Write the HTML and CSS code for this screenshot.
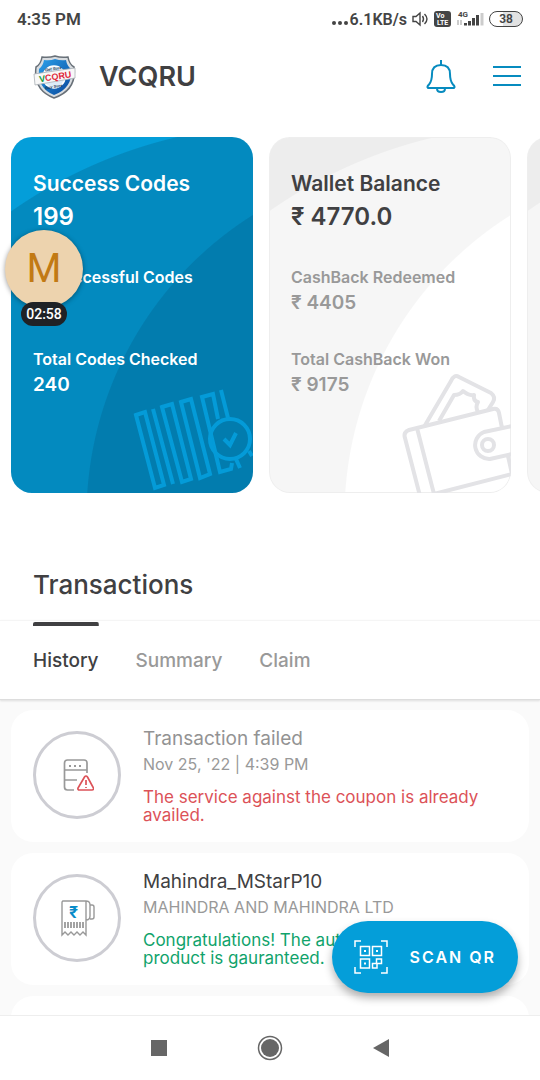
FILE: index.html
```html
<!DOCTYPE html>
<html lang="en">
<head>
<meta charset="utf-8">
<meta name="viewport" content="width=device-width, initial-scale=1">
<title>VCQRU</title>
<link rel="stylesheet" href="styles.css">
</head>
<body>
<div class="app">
  <div class="status-bar">
    <span>4:35 PM</span>
    <div class="status-icons">
      <span class="net-speed"><span class="dots"><i></i><i></i><i></i></span>6.1KB/s</span>
      <svg width="17" height="16" viewBox="0 0 17 16" fill="none" stroke="#444" stroke-width="1.4"><path d="M1 5.500H4L8 2V14L4 10.500H1Z"/><path d="M10.500 5Q12.500 8 10.500 11M12.500 3Q17.500 8 12.500 13"/></svg>
      <svg class="volte" width="17" height="16" viewBox="0 0 17 16"><rect width="17" height="16" rx="3" fill="#444"/><text x="2" y="7">Vo</text><text x="3" y="14">LTE</text></svg>
      <svg class="signal" width="28" height="18" viewBox="0 0 28 18"><text x="2" y="7">4G</text><path d="M2 10V15M5 10V15" stroke="#999"/><path d="M9.500 13V15.500M13.500 11V15.500M17.500 8V15.500M21.500 5V15.500" stroke="#444" stroke-width="3"/><path d="M26 3V15.500" stroke="#ccc" stroke-width="3"/></svg>
      <span class="battery">38</span>
    </div>
  </div>

  <header class="header">
    <svg class="logo" width="44" height="46" viewBox="0 0 44 46" role="img" aria-label="VCQRU logo">
      <defs><linearGradient id="shield" x1="0" y1="0" x2="1" y2="1"><stop offset="0" stop-color="#2ba0ea"/><stop offset="1" stop-color="#08479c"/></linearGradient></defs>
      <path d="M22 2Q28 4 35 3Q36 10 41 13Q44 36 21 44Q0 36 3 13Q8 10 9 3Q16 4 22 2Z" fill="#d8dce0" stroke="#687078" stroke-width="1.500"/>
      <path d="M22 5Q28 7 33 6Q34 12 38 15Q40 34 21 41Q4 34 6 15Q10 12 11 6Q17 7 22 5Z" fill="url(#shield)"/>
      <circle cx="21" cy="23" r="11" fill="#dcecf8" stroke="#fff" stroke-width="1.500"/>
      <text class="logo-small" x="12" y="16" transform="rotate(-9 21 15)">Get Sure</text>
      <text class="logo-small" x="12" y="34" transform="rotate(-9 21 33)">Buy Sure</text>
      <path d="M1 20L42 14V24L2 31Z" fill="#f8f8f8" stroke="#aab0b5" stroke-width=".8"/>
      <text class="logo-name" x="6" y="26" transform="rotate(-9 21 23)"><tspan fill="#16973a">V</tspan><tspan fill="#df2638">CQRU</tspan></text>
    </svg>
    <h1>VCQRU</h1>
    <div class="header-actions">
      <button type="button" aria-label="Notifications"><svg width="30" height="34" viewBox="0 0 30 34"><path d="M15 0V5M2 28Q0.500 27 3 24.500Q6 21 6 14Q6 5 15 5Q24 5 24 14Q24 21 27 24.500Q29.500 27 28 28ZM11 28.500Q11 32 15 32Q19 32 19 28.500"/></svg></button>
      <button type="button" aria-label="Menu"><svg width="28" height="34" viewBox="0 0 28 34"><path d="M0 7H28M0 16H28M0 25H28"/></svg></button>
    </div>
  </header>

  <main class="main">
    <section class="cards" aria-label="Overview">
      <article class="card card-blue">
        <h2>Success Codes</h2>
        <p class="card-total">199</p>
        <dl>
          <div><dt>Unsuccessful Codes</dt><dd>41</dd></div>
          <div><dt>Total Codes Checked</dt><dd>240</dd></div>
        </dl>
        <svg class="card-art" width="120" height="107" viewBox="0 0 120 107" fill="none" stroke="#049bd8" stroke-width="4"><path d="M3 29L12 26L31 99L22 102ZM20 23L40 98M29 21L39 18L58 93L49 96ZM48 16L58 13L77 88L67 92ZM85 33L80 8L69 11L87 86L98 83L99 77M88 4L95 32M103 73L107 82M116 65L119 70"/><circle cx="97" cy="53" r="20"/><path d="M91 53L97 59L103 47"/></svg>
      </article>
      <article class="card card-light">
        <h2>Wallet Balance</h2>
        <p class="card-total">₹ 4770.0</p>
        <dl>
          <div><dt>CashBack Redeemed</dt><dd>₹ 4405</dd></div>
          <div><dt>Total CashBack Won</dt><dd>₹ 9175</dd></div>
        </dl>
        <svg class="card-art" width="112" height="122" viewBox="0 0 112 122" fill="none" stroke="#e3e3e6" stroke-width="4" stroke-linejoin="round"><path d="M21 125L6 67Q4 61 10 59L94 38Q99 37 100 42L103 57M18 57L35 123L113 103L109 85M113 55L85 61A14 14 0 0 0 91 88L113 83"/><circle cx="89" cy="74" r="6"/><path d="M25 56L52 10Q55 3 60 6L92 22Q97 26 94 31L89 39M40 50L55 24Q61 24 64 20Q70 25 75 24Q74 30 79 31Q76 36 79 41"/></svg>
      </article>
      <article class="card card-light" aria-label="More"></article>
    </section>

    <h2 class="section-title">Transactions</h2>
    <nav class="tabs" role="tablist">
      <button type="button" role="tab" class="tab active" aria-selected="true">History</button>
      <button type="button" role="tab" class="tab">Summary</button>
      <button type="button" role="tab" class="tab">Claim</button>
    </nav>

    <section class="transactions" aria-label="History">
      <article class="item">
        <div class="item-icon"><svg width="34" height="32" viewBox="-3 0 34 32" fill="none" stroke="#999" stroke-width="1.700"><path d="M24 14V4Q24 1 21 1H4.500Q1.500 1 1.500 4V28Q1.500 31 4.500 31H11M1.500 11H24M1.500 21H14"/><path d="M6 7H8M11 7H13M16 7H18" stroke-width="2"/><path d="M21.500 18Q23 16 24.500 18L30.500 29Q31 31 29 31H16.500Q14.500 31 15 29ZM23 21V26M23 28V29" stroke="#dc5258"/></svg></div>
        <div class="item-text">
          <h3 class="muted">Transaction failed</h3>
          <p class="sub">Nov 25, '22 | 4:39 PM</p>
          <p class="message error">The service against the coupon is already availed.</p>
        </div>
      </article>
      <article class="item">
        <div class="item-icon"><svg width="36" height="38" viewBox="-1 -1 36 38" fill="none" stroke="#999" stroke-width="1.400"><path d="M26 20V1H3Q2 1 2 3V35L5 32L8 35L11 32L14 35L17 32L20 35L23 32L26 35V20M26 1Q30 1 30 5V16Q30 20 26 20M30 5H32Q34 5 34 7V17Q34 19 32 19H30"/><path d="M5 22V28M8 22V28M11 22V28M14 22V28M17 22V28M20 22V28M23 22V28" stroke-width="1.800"/><text class="rupee" x="9" y="18">₹</text></svg></div>
        <div class="item-text">
          <h3>Mahindra_MStarP10</h3>
          <p class="sub">MAHINDRA AND MAHINDRA LTD</p>
          <p class="message success">Congratulations! The authenticity of<br>product is gauranteed.</p>
        </div>
      </article>
      <article class="item"></article>
    </section>

    <button type="button" class="scan"><svg width="34" height="34" viewBox="0 0 34 34" fill="none" stroke="#fff" stroke-width="1.500"><path d="M1 7V1H7M27 1H33V7M33 27V33H27M7 33H1V27"/><path d="M6.500 6.500H15.500V15.500H6.500ZM18.500 6.500H27.500V15.500H18.500ZM6.500 19H15.500V28H6.500ZM22.500 19H27.500V23.500H22.500ZM18.500 23.500H23V28H18.500Z"/><path d="M10 11H12M22 11H24M10 23.500H12" stroke-width="2"/></svg><span>SCAN QR</span></button>
  </main>

  <nav class="system-nav" aria-label="System">
    <button type="button" aria-label="Recent apps"><svg width="26" height="26" viewBox="0 0 26 26"><path d="M5 5H21V21H5Z"/></svg></button>
    <button type="button" aria-label="Home"><svg width="26" height="26" viewBox="0 0 26 26"><circle cx="13" cy="13" r="11.500" fill="none" stroke="#666" stroke-width="1.500"/><circle cx="13" cy="13" r="9"/></svg></button>
    <button type="button" aria-label="Back"><svg width="26" height="26" viewBox="0 0 26 26"><path d="M5 13L21 4V22Z"/></svg></button>
  </nav>

  <div class="recorder">
    <div class="avatar">M</div>
    <div class="timer">02:58</div>
  </div>
</div>
</body>
</html>
```
FILE: styles.css
```css
* { box-sizing: border-box; }
body, h1, h2, h3, p, dl, dd { margin: 0; }
body { font-family: Inter, "Liberation Sans", sans-serif; color: #404042; background: #fff; }
button { font: inherit; color: inherit; border: 0; padding: 0; background: none; }
svg { display: block; }

.app { position: relative; display: flex; flex-direction: column; height: 100vh; overflow: hidden; }

.status-bar { display: flex; justify-content: space-between; align-items: center; flex: none; height: 38px; padding: 0 17px; font: 600 17px Roboto, sans-serif; color: #444; }
.status-icons { display: flex; align-items: center; gap: 5px; }
.net-speed { display: flex; align-items: baseline; gap: 2px; font-size: 16px; }
.dots { display: flex; gap: 2px; }
.dots i { width: 4px; height: 4px; border-radius: 50%; background: #444; }
.volte text { fill: #fff; font: 700 7px Roboto, sans-serif; }
.signal text { fill: #444; font: 700 8px Roboto, sans-serif; }
.battery { width: 34px; border: 1px solid #444; border-radius: 8px; font-size: 12px; line-height: 14px; text-align: center; background: linear-gradient(90deg, #fff 40%, #e2e2e2 40%); }

.header { display: flex; align-items: center; flex: none; height: 77px; padding: 0 19px 0 33px; }
.logo-small { font: italic 700 4px "Liberation Sans", sans-serif; fill: #173353; }
.logo-name { font: 700 9px "Liberation Sans", sans-serif; }
.header h1 { margin-left: 22px; font-size: 27px; font-weight: 600; }
.header-actions { display: flex; gap: 37px; margin-left: auto; }
.header-actions svg { fill: none; stroke: #078bbf; stroke-width: 2; }

.main { position: relative; display: flex; flex-direction: column; flex: 1; min-height: 0; }

.cards { display: flex; flex: none; gap: 16px; padding: 22px 11px 0; overflow: hidden; }
.card { position: relative; flex: 0 0 242px; padding: 30px 22px 94px; border-radius: 21px; overflow: hidden; }
.card-blue { color: #fff; background: radial-gradient(circle at 431px 379px, #027cae 355px, transparent 356px), radial-gradient(circle at 275px 466px, #038abf 478px, transparent 479px), #049ed9; }
.card-light { background: radial-gradient(circle at 431px 379px, #fff 355px, transparent 356px), radial-gradient(circle at 275px 466px, #f6f6f6 478px, transparent 479px), #ededed; box-shadow: inset 0 0 0 1px #eee; }
.card h2 { font-size: 21px; font-weight: 600; line-height: 34px; white-space: nowrap; }
.card-total { font-size: 24px; font-weight: 600; line-height: 32px; }
.card dl { display: flex; flex-direction: column; gap: 30px; margin-top: 32px; font-weight: 600; white-space: nowrap; }
.card dt { font-size: 16px; line-height: 24px; }
.card dd { font-size: 19px; line-height: 28px; }
.card-light dl { color: #999; }
.card-art { position: absolute; right: 0; bottom: 0; }

.section-title { flex: none; padding: 73px 33px 16px; font-size: 26px; font-weight: 500; line-height: 38px; }

.tabs { position: relative; display: flex; flex: none; gap: 37px; padding: 0 33px; border-top: 1px solid #f5f5f5; border-bottom: 1px solid #ddd; box-shadow: 0 1px 2px #ddd; }
.tab { border-top: 4px solid transparent; margin-top: 1px; padding: 21px 0 24px; font-size: 19px; font-weight: 500; line-height: 28px; color: #999; }
.tab.active { color: #404042; background: linear-gradient(#404042, #404042) top / 100% 4px no-repeat border-box; border-radius: 2px; }

.transactions { display: flex; flex: 1; flex-direction: column; gap: 11px; min-height: 0; padding: 10px 11px 0; overflow: hidden; background: #fafafa; }
.item { display: flex; flex: none; align-items: center; gap: 22px; min-height: 132px; padding: 16px 22px 18px; border-radius: 22px; background: #fff; }
.item-icon { display: flex; align-items: center; justify-content: center; flex: none; width: 88px; height: 88px; border: 3px solid #cdcdd3; border-radius: 50%; }
.item-text { min-width: 0; }
.item h3 { font-size: 19px; font-weight: 400; line-height: 26px; }
.item h3.muted { color: #939393; }
.sub { font-size: 16px; line-height: 24px; color: #999; }
.message { margin-top: 12px; font-size: 17px; line-height: 18px; }
.error { color: #dc5258; }
.success { color: #10a36b; }
.rupee { fill: #078bc8; stroke: none; font: 700 16px Inter, sans-serif; }

.scan { position: absolute; right: 22px; bottom: 22px; display: flex; align-items: center; gap: 22px; padding: 19px 22px; border-radius: 36px; color: #fff; background: #049ed9; box-shadow: 0 5px 9px rgba(0, 0, 0, .3); font-size: 16px; font-weight: 600; letter-spacing: 2px; line-height: 34px; white-space: nowrap; }

.system-nav { display: flex; justify-content: center; align-items: center; gap: 85px; flex: none; height: 65px; border-top: 1px solid #eee; background: #fff; }
.system-nav svg { fill: #666; }

.recorder { position: absolute; left: 5px; top: 230px; display: flex; flex-direction: column; align-items: center; font-family: Roboto, sans-serif; }
.avatar { width: 78px; height: 78px; border-radius: 50%; background: #edd3ae; color: #c27a14; font-size: 40px; line-height: 78px; text-align: center; box-shadow: 0 1px 5px rgba(0, 0, 0, .4); }
.timer { margin-top: -6px; padding: 0 5px; border-radius: 12px; color: #fff; background: #202226; font-size: 14px; font-weight: 500; line-height: 24px; }
```
